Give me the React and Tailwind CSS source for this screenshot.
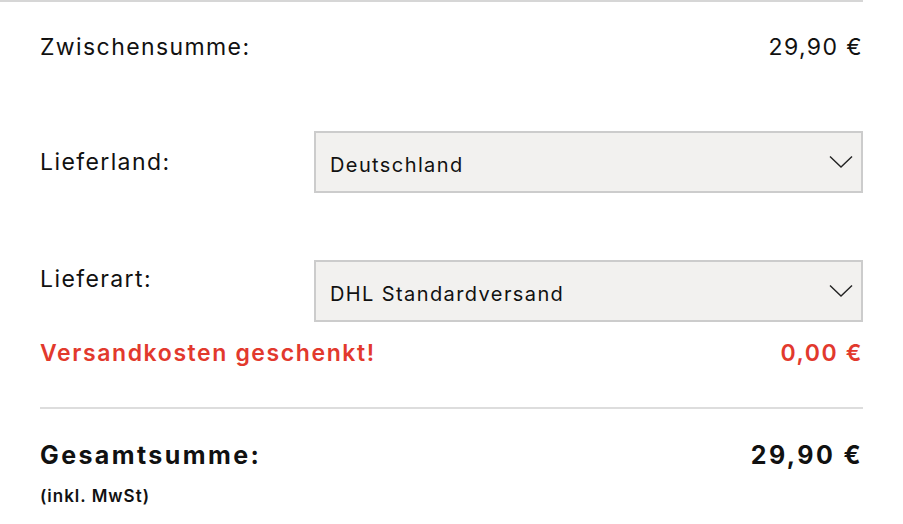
import React from "react";

function Select({ value }) {
    return (
        <div className="flex-1 h-[62px] bg-[#f2f1ef] border-2 border-[#cccccc] flex items-center justify-between pl-[14px] pr-[8px]">
            <span className="text-[20px] text-[#111] tracking-[1.4px] pt-[5px]">{value}</span>
            <svg width="24" height="14" viewBox="0 0 24 14" fill="none">
                <path d="M1 1.5 L12 12 L23 1.5" stroke="#222" strokeWidth="1.4" />
            </svg>
        </div>
    );
}

export default function App() {
    return (
        <div className="w-[903px] h-[524px] bg-white overflow-hidden" style={{ fontFamily: "Inter, 'Noto Sans', sans-serif" }}>
            <div className="w-[863px] h-[2px] bg-[#d6d6d6]" />
            <div className="pl-10 w-[863px] text-[#111]">
                {/* Subtotal */}
                <div className="flex justify-between items-center h-[92px] pb-[2px] text-[23px] tracking-[1.4px]">
                    <span>Zwischensumme:</span>
                    <span>29,90 €</span>
                </div>

                {/* Country */}
                <div className="flex items-center mt-[37px]">
                    <span className="w-[274px] text-[23px] tracking-[1.4px]">Lieferland:</span>
                    <Select value="Deutschland" />
                </div>

                {/* Shipping */}
                <div className="flex items-start mt-[67px]">
                    <span className="w-[274px] text-[23px] tracking-[1.4px] mt-[2px]">Lieferart:</span>
                    <Select value="DHL Standardversand" />
                </div>

                <div className="flex justify-between items-center h-[34px] mt-[14px] text-[23px] font-semibold text-[#e2392d] tracking-[1.6px]">
                    <span>Versandkosten geschenkt!</span>
                    <span>0,00 €</span>
                </div>

                <div className="h-[2px] bg-[#dddddd] mt-[37px]" />

                {/* Total */}
                <div className="flex justify-between items-center mt-[28px] text-[25px] font-bold tracking-[2.4px]">
                    <span>Gesamtsumme:</span>
                    <span>29,90 €</span>
                </div>
                <div className="text-[17px] font-semibold tracking-[1px] mt-[9px]">(inkl. MwSt)</div>
            </div>
        </div>
    );
}
